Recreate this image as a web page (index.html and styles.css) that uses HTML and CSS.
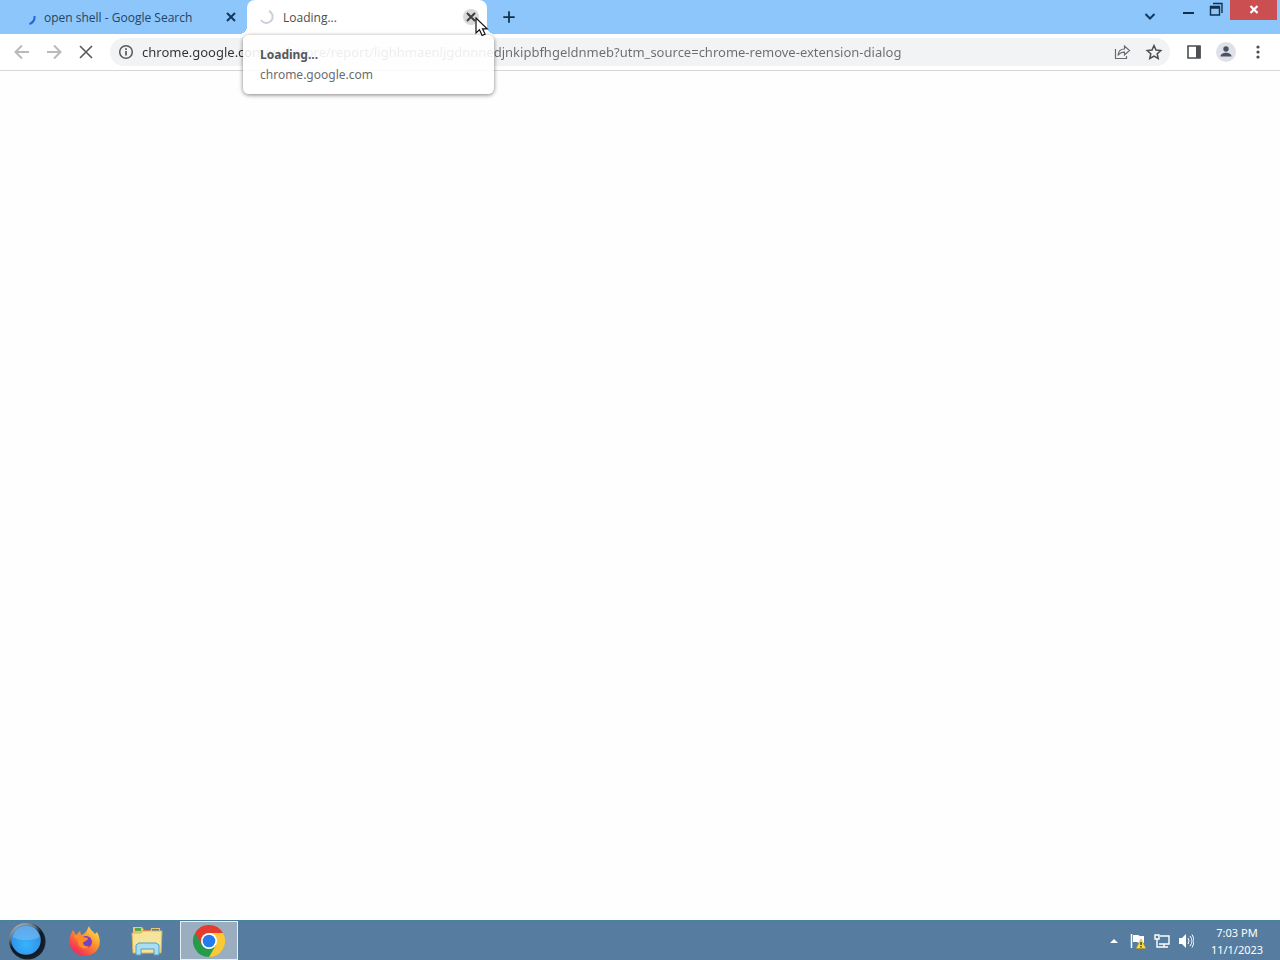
FILE: index.html
```html
<!DOCTYPE html>
<html lang="en">
<head>
    <meta charset="UTF-8">
    <meta name="viewport" content="width=device-width, initial-scale=1.0">
    <title>Loading...</title>
    <link rel="stylesheet" href="styles.css">
</head>
<body>
    <header class="tab-strip">
        <div class="tab">
            <svg class="spinner" viewBox="0 0 16 16"><path d="M14.500 7c.4 3.500-1.500 6.500-5 8" fill="none" stroke="#2467d0" stroke-width="2"/></svg>
            <span class="tab-title">open shell - Google Search</span>
            <button class="tab-close" aria-label="Close tab"><svg viewBox="0 0 16 16"><path d="M4 4l8 8M12 4l-8 8" stroke="#12395c" stroke-width="2"/></svg></button>
        </div>
        <div class="tab active">
            <svg class="spinner" viewBox="0 0 16 16"><path d="M10 2A6.300 6.300 0 1 1 2 11" fill="none" stroke="#cdd0dc" stroke-width="2"/></svg>
            <span class="tab-title">Loading...</span>
            <button class="tab-close hovered" aria-label="Close tab"><svg viewBox="0 0 16 16"><path d="M4 4l8 8M12 4l-8 8" stroke="#3c4043" stroke-width="2"/></svg></button>
            <div class="hover-card">
                <strong>Loading...</strong>
                <span>chrome.google.com</span>
            </div>
            <svg class="cursor" viewBox="0 0 14 20"><path d="M1 1v15l3.500-3.200 2.600 5.700 3-1.400-2.600-5.300h4.700z" fill="#fff" stroke="#111" stroke-width="1.200"/></svg>
        </div>
        <button class="new-tab" aria-label="New tab"><svg viewBox="0 0 16 16"><path d="M8 1.500v13M1.500 8h13" stroke="#12304c" stroke-width="2"/></svg></button>
        <div class="window-buttons">
            <button class="search-tabs" aria-label="Search tabs"><svg viewBox="0 0 16 16"><path d="M3.500 6L8 10.500 12.500 6" fill="none" stroke="#12395c" stroke-width="2"/></svg></button>
            <button class="minimize" aria-label="Minimize"><svg viewBox="0 0 16 16"><path d="M3 11h11" stroke="#12304c" stroke-width="2"/></svg></button>
            <button class="restore" aria-label="Restore"><svg viewBox="0 0 16 16"><path d="M2.500 4.500h9v8.500h-9zM2.500 6h9M5 1.500h9V11" fill="none" stroke="#12304c" stroke-width="1.400"/></svg></button>
            <button class="close" aria-label="Close"><svg viewBox="0 0 16 16"><path d="M4.500 4l7 7M11.500 4l-7 7" stroke="#fff" stroke-width="2.200"/></svg></button>
        </div>
    </header>

    <nav class="toolbar">
        <button class="tool" aria-label="Back"><svg viewBox="0 0 20 20"><path d="M17 10H4M10 3.500L3.500 10l6.500 6.500" fill="none" stroke="#b9babd" stroke-width="2"/></svg></button>
        <button class="tool" aria-label="Forward"><svg viewBox="0 0 20 20"><path d="M3 10h13M10 3.500l6.500 6.500-6.500 6.500" fill="none" stroke="#b9babd" stroke-width="2"/></svg></button>
        <button class="tool" aria-label="Stop"><svg viewBox="0 0 20 20"><path d="M4 4l12 12M16 4L4 16" stroke="#55585c" stroke-width="1.600"/></svg></button>
        <div class="omnibox">
            <button class="tool" aria-label="View site information"><svg viewBox="0 0 20 20"><circle cx="10" cy="10" r="6.300" fill="none" stroke="#55585c" stroke-width="1.500"/><path d="M10 9v4.500M10 6.300v1.700" stroke="#55585c" stroke-width="1.700"/></svg></button>
            <input class="address" type="text" aria-label="Address" value="chrome.google.com/webstore/report/lighhmaenljgdnnnedjnkipbfhgeldnmeb?utm_source=chrome-remove-extension-dialog">
            <button class="tool" aria-label="Share"><svg viewBox="0 0 20 20"><path d="M3.500 7v9.500h11V14M6 13.500c.3-4.500 2.800-6.500 6.500-6.500V4L17.500 8.500 12.500 13v-2.800c-3 0-5 .8-6.500 3.300z" fill="none" stroke="#66696d" stroke-width="1.200"/></svg></button>
            <button class="tool" aria-label="Bookmark this tab"><svg viewBox="0 0 20 20"><path d="M10 3.500l2 4.500 4.800.5-3.600 3.200 1 4.800L10 14l-4.200 2.500 1-4.800-3.600-3.200L8 8z" fill="none" stroke="#4b4e52" stroke-width="1.500"/></svg></button>
        </div>
        <button class="tool" aria-label="Side panel"><svg viewBox="0 0 20 20"><path d="M4 4h12v12H4z" fill="none" stroke="#4b4e52" stroke-width="1.600"/><path d="M12 4h4.500v12H12z" fill="#4b4e52"/></svg></button>
        <button class="tool profile" aria-label="Profile"><svg viewBox="0 0 20 20"><circle cx="10" cy="7" r="2.700" fill="#4a5264"/><path d="M4.500 14.500c0-5 11-5 11 0z" fill="#4a5264"/></svg></button>
        <button class="tool" aria-label="Menu"><svg viewBox="0 0 20 20"><g fill="#4b4e52"><circle cx="10" cy="5" r="1.600"/><circle cx="10" cy="10" r="1.600"/><circle cx="10" cy="15" r="1.600"/></g></svg></button>
    </nav>

    <main class="page"></main>

    <footer class="taskbar">
        <button class="start" aria-label="Start">
            <svg viewBox="0 0 40 40">
                <defs>
                    <linearGradient id="rim" x1="0" y1="0" x2=".5" y2="1"><stop offset="0" stop-color="#c3c9ce"/><stop offset=".4" stop-color="#66717a"/><stop offset=".6" stop-color="#101923"/></linearGradient>
                    <radialGradient id="orb" cx=".5" cy=".65" r=".65"><stop offset="0" stop-color="#35b5fc"/><stop offset=".7" stop-color="#3296ec"/><stop offset="1" stop-color="#4388c5"/></radialGradient>
                </defs>
                <circle cx="20.500" cy="20.500" r="19" fill="#14202c"/>
                <circle cx="19" cy="19" r="18" fill="url(#rim)"/>
                <circle cx="19" cy="19" r="15.500" fill="url(#orb)"/>
                <path d="M5 16c2-16 26-16 28 0-7 4-21 4-28 0z" fill="#7bbcf3" opacity=".6"/>
            </svg>
        </button>
        <button class="task" aria-label="Firefox">
            <svg viewBox="0 0 32 32">
                <defs><linearGradient id="fox" x1="1" y1="0" x2=".2" y2="1"><stop offset=".1" stop-color="#ffe14b"/><stop offset=".5" stop-color="#ff8b2c"/><stop offset=".85" stop-color="#f33b52"/><stop offset="1" stop-color="#dd2c7b"/></linearGradient></defs>
                <path d="M20 1c1 4 4 5 6 8l2-2c7 12 0 24-12 24S-3 20 2 9l2-4 3 5 4-4 1 4c5-1 6-5 8-9z" fill="url(#fox)"/>
                <circle cx="17" cy="17" r="6" fill="#7442c5"/>
                <path d="M5 11c4-3 8 0 9 1l5 1c0 3-4 3-5 5 0 2 3 4 6 3-3 5-11 2-11-4z" fill="#ff8a28"/>
            </svg>
        </button>
        <button class="task" aria-label="File Explorer">
            <svg viewBox="0 0 32 32">
                <path d="M2 5V2h9l2 3h7V3h9l1 23H2z" fill="#e8c871"/>
                <path d="M4 3h6v3H4z" fill="#53a747"/><path d="M12 5h7v3h-7z" fill="#d95743"/><path d="M21 4h7v3h-7z" fill="#4288bf"/>
                <path d="M1 8h9l2-2h19l-1 22H2z" fill="#f7e49b" stroke="#d6b55d"/>
                <path d="M5 30V20l3-2h17l3 2v10h-5v-6H10v6z" fill="#a9def2" stroke="#519fc8"/>
            </svg>
        </button>
        <button class="task running" aria-label="Google Chrome">
            <svg viewBox="0 0 32 32">
                <path d="M16 16V8h13.860A16 16 0 0 1 16 32z" fill="#fcc934"/>
                <path d="M2.140 8A16 16 0 0 0 16 32l6.930-12H16z" fill="#269b4b"/>
                <path d="M2.140 8L9.070 20 16 16V8h13.860A16 16 0 0 0 2.140 8z" fill="#e33b2e"/>
                <circle cx="16" cy="16" r="8" fill="#fff"/>
                <circle cx="16" cy="16" r="6.300" fill="#267bea"/>
            </svg>
        </button>
        <div class="tray">
            <button aria-label="Show hidden icons"><svg viewBox="0 0 16 16"><path d="M4 10l4-4 4 4z" fill="#fff"/></svg></button>
            <button aria-label="Action center"><svg viewBox="0 0 16 16"><path d="M1.500 1v14" stroke="#fff" stroke-width="1.500"/><path d="M3 2h5l2 1h4v7H9L7 9H3z" fill="#fff"/><path d="M11 6l5 9.500H6z" fill="#ffdd36" stroke="#a58b20" stroke-width=".5"/><path d="M11 9v3M11 13v1.500" stroke="#333" stroke-width="1.400"/></svg></button>
            <button aria-label="Network"><svg viewBox="0 0 16 16"><path d="M6 3h9v8H5M10 11v3M6 14h8M1 2h4v4H1zM3 6v8h3" fill="none" stroke="#fff" stroke-width="1.400"/></svg></button>
            <button aria-label="Volume"><svg viewBox="0 0 16 16"><path d="M1 5h3l4-4v14l-4-4H1z" fill="#fff"/><path d="M10 5q2 3 0 6M12 3q4 5 0 10M14 1.500q4 6.500 0 13" fill="none" stroke="#fff"/></svg></button>
            <button class="clock"><time>7:03 PM</time><span>11/1/2023</span></button>
        </div>
    </footer>
</body>
</html>
```
FILE: styles.css
```css
* {
    box-sizing: border-box;
}
body {
    display: flex;
    flex-direction: column;
    min-height: 100vh;
    margin: 0;
    font-family: "Noto Sans", "Open Sans", sans-serif;
    font-size: 12px;
    color: #3c4043;
    background: #fff;
}
button {
    display: flex;
    align-items: center;
    justify-content: center;
    flex: none;
    padding: 0;
    border: 0;
    background: none;
    font: inherit;
    color: inherit;
}
svg {
    display: block;
    width: 16px;
    height: 16px;
    flex: none;
}

/* tabs */
.tab-strip {
    display: flex;
    height: 34px;
    background: #8cc6fb;
}
.tab {
    position: relative;
    display: flex;
    align-items: center;
    gap: 8px;
    width: 240px;
    padding: 0 8px 0 12px;
    font-family: "Open Sans", "Noto Sans", sans-serif;
    color: #24455f;
}
.tab:first-child {
    width: 247px;
    padding-left: 20px;
}
.tab.active {
    background: #fff;
    border-radius: 8px 8px 0 0;
    color: #4a4d51;
}
.tab.active::before,
.tab.active::after {
    content: "";
    position: absolute;
    bottom: 0;
    width: 8px;
    height: 8px;
}
.tab.active::before {
    left: -8px;
    background: radial-gradient(circle at 0 0, transparent 8px, #fff 8px);
}
.tab.active::after {
    right: -8px;
    background: radial-gradient(circle at 100% 0, transparent 8px, #fff 8px);
}
.tab-title {
    flex: 1;
    white-space: nowrap;
}
.tab-close {
    width: 16px;
    height: 16px;
    border-radius: 50%;
}
.tab-close.hovered {
    background: #d9d9da;
}
.hover-card {
    position: absolute;
    top: 35px;
    left: -4px;
    z-index: 2;
    display: flex;
    flex-direction: column;
    width: 251px;
    padding: 10px 17px 9px;
    border-radius: 6px;
    background: rgba(255, 255, 255, 0.88);
    box-shadow: 0 1px 4px rgba(0, 0, 0, 0.5);
    font-family: "Noto Sans", "Open Sans", sans-serif;
    line-height: 20px;
    color: #6a6c6f;
}
.hover-card strong {
    color: #55575a;
}
.cursor {
    position: absolute;
    top: 17px;
    left: 228px;
    z-index: 3;
    width: 14px;
    height: 20px;
}
.new-tab {
    width: 44px;
}
.new-tab svg {
    width: 14px;
    height: 14px;
}
.window-buttons {
    display: flex;
    align-items: flex-start;
    margin-left: auto;
    padding-right: 3px;
}
.window-buttons button {
    height: 20px;
}
.window-buttons .search-tabs {
    width: 48px;
    height: 32px;
}
.window-buttons .minimize,
.window-buttons .restore {
    width: 28px;
}
.window-buttons .close {
    width: 47px;
    background: #cb4f50;
}

/* toolbar */
.toolbar {
    display: flex;
    align-items: center;
    gap: 4px;
    height: 37px;
    padding: 0 8px;
    border-bottom: 1px solid #d6d7d9;
}
.tool {
    width: 28px;
    height: 28px;
}
.tool svg {
    width: 20px;
    height: 20px;
}
.omnibox {
    display: flex;
    align-items: center;
    gap: 4px;
    flex: 1;
    height: 28px;
    margin: 0 6px;
    padding: 0 2px;
    border-radius: 14px;
    background: #f2f3f4;
}
.address {
    flex: 1;
    min-width: 0;
    height: 28px;
    margin-left: -2px;
    padding: 0;
    border: 0;
    outline: 0;
    font-family: inherit;
    font-size: 13px;
    color: transparent;
    background: linear-gradient(90deg, #303336 112px, #6a6d70 112px);
    -webkit-background-clip: text;
    background-clip: text;
}
.profile svg {
    border-radius: 50%;
    background: #dee1e7;
}

.page {
    flex: 1;
    background: #fefefe;
}

/* taskbar */
.taskbar {
    display: flex;
    align-items: center;
    height: 40px;
    background: #567d9f;
    border-top: 1px solid #4b809c;
    color: #fff;
}
.start {
    width: 54px;
    margin-right: 2px;
}
.start svg {
    width: 38px;
    height: 38px;
}
.task {
    width: 58px;
    height: 39px;
    margin-right: 4px;
}
.task svg {
    width: 32px;
    height: 32px;
}
.running {
    border: 1px solid #e8eef2;
    background: #9baebf;
}
.tray {
    display: flex;
    align-items: center;
    gap: 8px;
    margin-left: auto;
    padding-right: 8px;
}
.clock {
    flex-direction: column;
    width: 70px;
    font-size: 11px;
    line-height: 17px;
}
```
